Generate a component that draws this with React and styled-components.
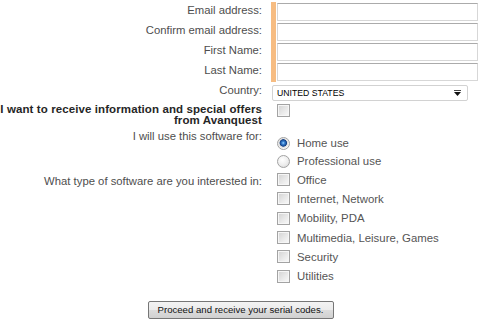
import React from "react";
import styled, { createGlobalStyle } from "styled-components";

const GlobalStyle = createGlobalStyle`
  html, body { margin: 0; padding: 0; background: #ffffff; }
  body { font-family: "Liberation Sans", Arial, sans-serif; overflow: hidden; }
`;

const Form = styled.form`
  width: 481px;
  padding-top: 2px;
  display: flex;
  flex-direction: column;
`;

const Row = styled.div`
  display: grid;
  grid-template-columns: 262px 1fr;
  column-gap: 9px;
  height: ${(p) => p.$h}px;
`;

const Label = styled.div`
  display: flex;
  flex-direction: column;
  align-items: flex-end;
  white-space: nowrap;
  font-size: 11.3px;
  line-height: 16px;
  color: #4e4e4e;
  margin-top: ${(p) => p.$top || 0}px;
`;

const BoldLabel = styled(Label)`
  font-weight: bold;
  font-size: 11.5px;
  letter-spacing: 0.1px;
  line-height: 11px;
  color: #262626;
`;

const Field = styled.div`
  display: flex;
  flex-direction: column;
  align-items: flex-start;
  padding-top: ${(p) => p.$top || 0}px;
  padding-left: ${(p) => p.$left || 0}px;
  ${(p) => (p.$required ? "border-left: 5px solid #f6bc82;" : "")}
`;

const TextInput = styled.input`
  box-sizing: border-box;
  width: 201px;
  height: 18px;
  margin: 1px 0 0 0;
  padding: 0 3px;
  border: 1px solid #d7d7d7;
  border-top-color: #ababab;
  background: #fff;
  font-family: inherit;
  font-size: 11px;
  outline: none;
`;

const SelectBox = styled.div`
  box-sizing: border-box;
  width: 196px;
  height: 16px;
  margin-left: 1px;
  border: 1px solid #d2d2d2;
  border-radius: 2px;
  background: #fff;
  display: flex;
  align-items: center;
  justify-content: space-between;
  padding: 0 6px 0 4px;
  font-size: 8.7px;
  color: #000;
`;

const Arrow = styled.svg`
  width: 7px;
  height: 6px;
  display: block;
`;

const Option = styled.label`
  display: flex;
  align-items: center;
  gap: 7px;
  height: ${(p) => p.$h}px;
  font-size: 11.4px;
  color: #555555;
  white-space: nowrap;
`;

const CheckBox = styled.input.attrs({ type: "checkbox" })`
  appearance: none;
  -webkit-appearance: none;
  box-sizing: border-box;
  width: 13px;
  height: 13px;
  margin: 0;
  flex: none;
  border: 1px solid #a3a3a3;
  box-shadow: inset 0 0 0 1px #f6f6f6;
  background: linear-gradient(135deg, #d2d2d2 0%, #e9e9e9 55%, #fafafa 100%);
`;

const Radio = styled.input.attrs({ type: "radio" })`
  appearance: none;
  -webkit-appearance: none;
  box-sizing: border-box;
  width: 13px;
  height: 13px;
  margin: 0;
  flex: none;
  border-radius: 50%;
  border: 1px solid #a2a2a2;
  background: radial-gradient(circle at 40% 35%, #ffffff 0%, #ededed 55%, #d0d0d0 100%);
  &:checked {
    background: radial-gradient(
      circle at 48% 45%,
      #a6d8ff 0px,
      #3b86d6 1.3px,
      #123f86 3.4px,
      #d9d9d9 4px,
      #f7f7f7 5.5px
    );
  }
`;

const ButtonRow = styled.div`
  display: flex;
  justify-content: center;
  margin-top: 15px;
`;

const Button = styled.button`
  box-sizing: border-box;
  width: 186px;
  height: 18px;
  padding: 0;
  border: 1px solid #767676;
  border-radius: 2px;
  background: linear-gradient(#f3f3f3 0%, #ebebeb 50%, #dcdcdc 51%, #d0d0d0 100%);
  font-family: "Liberation Sans", Arial, sans-serif;
  font-size: 9.6px;
  color: #111;
  line-height: 16px;
`;

const textFields = [
  "Email address:",
  "Confirm email address:",
  "First Name:",
  "Last Name:",
];

const softwareTypes = [
  "Office",
  "Internet, Network",
  "Mobility, PDA",
  "Multimedia, Leisure, Games",
  "Security",
  "Utilities",
];

export default function App() {
  return (
    <>
      <GlobalStyle />
      <Form onSubmit={(e) => e.preventDefault()}>
        {textFields.map((t) => (
          <Row key={t} $h={20}>
            <Label>{t}</Label>
            <Field $required $left={1}>
              <TextInput type="text" />
            </Field>
          </Row>
        ))}
        <Row $h={21}>
          <Label>Country:</Label>
          <Field $top={3}>
            <SelectBox>
              <span>UNITED STATES</span>
              <Arrow viewBox="0 0 7 6">
                <rect x="0" y="0" width="7" height="1" fill="#444" />
                <polygon points="0,2 7,2 3.5,6" fill="#111" />
              </Arrow>
            </SelectBox>
          </Field>
        </Row>
        <Row $h={23}>
          <BoldLabel $top={1}>
            <span>I want to receive information and special offers</span>
            <span>from Avanquest</span>
          </BoldLabel>
          <Field $top={1} $left={6}>
            <CheckBox />
          </Field>
        </Row>
        <Row $h={44}>
          <Label $top={2}>I will use this software for:</Label>
          <Field $top={8} $left={6}>
            <Option $h={18}>
              <Radio name="use" defaultChecked />
              Home use
            </Option>
            <Option $h={18}>
              <Radio name="use" />
              Professional use
            </Option>
          </Field>
        </Row>
        <Row $h={116}>
          <Label $top={3}>What type of software are you interested in:</Label>
          <Field $left={6}>
            {softwareTypes.map((s) => (
              <Option key={s} $h={19.3}>
                <CheckBox />
                {s}
              </Option>
            ))}
          </Field>
        </Row>
        <ButtonRow>
          <Button type="submit">Proceed and receive your serial codes.</Button>
        </ButtonRow>
      </Form>
    </>
  );
}
